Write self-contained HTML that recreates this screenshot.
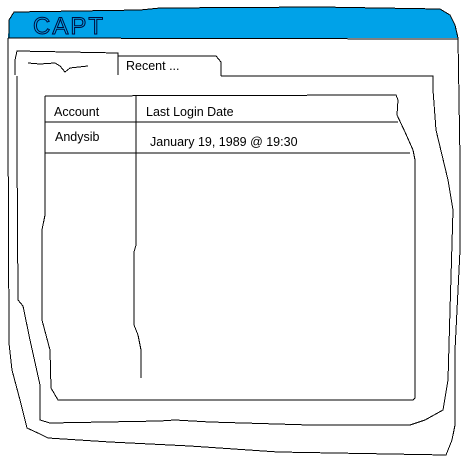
<!DOCTYPE html>
<html><head><meta charset="utf-8"><style>
html,body{margin:0;padding:0;background:#fff;width:465px;height:459px;overflow:hidden}
svg{display:block}
text{font-family:"Liberation Sans",sans-serif;font-size:12.5px;fill:#000;stroke:none}
polyline,line,path{shape-rendering:crispEdges}
</style></head><body>
<svg width="465" height="459" viewBox="0 0 465 459" xmlns="http://www.w3.org/2000/svg" fill="none" stroke="#000" stroke-width="1">
<!-- title bar -->
<path d="M8,38 L9,20 L14,12 L140,10 L160,8 L320,7 L440,9 L450,15 L455,25 L458,38 Z" fill="#00a2e8" stroke="none"/>
<polyline points="9,38 9,20 14,12 140,10 160,8 320,7 440,9 450,15 455,25 458,38"/>
<line x1="8" y1="38" x2="458" y2="39"/>
<text x="33" y="34" style="font-size:24px;fill:none;stroke:#000b3a;stroke-width:1;letter-spacing:2px">CAPT</text>
<!-- outer window -->
<polyline points="8,38 8,120 9,343 12,370 20,400 27,428 40,434 48,438 110,442 190,446 278,452 446,455 452,440 455,425 455,350 460,250 460,160 458,38"/>
<!-- inactive tab -->
<polyline points="15,75 15,60 17,51 118,53 118,75"/>
<path d="M28,63 L40,64 L55,63 L60,66 L65,72 L70,68 L88,66"/>
<!-- active tab -->
<polyline points="118,56 216,56 221,62 221,76"/>
<!-- panel -->
<polyline points="17,76 17,150 18,300 23,306 30,340 40,385 40,420 50,423 160,421 175,420 210,422 310,425 410,425 425,420 443,410 448,380 450,310 453,210 448,180 436,130 433,90 433,76 221,76"/>
<!-- table -->
<polyline points="45,96 396,95 398,100 397,115 405,132 413,150 415,160 415,398 413,400 58,400 51,388 50,350 42,320 42,230 45,215 45,96"/>
<line x1="45" y1="122" x2="398" y2="122"/>
<line x1="45" y1="153" x2="410" y2="153"/>
<polyline points="136,96 136,245 134,252 134,325 138,335 141,350 141,378"/>
<text x="54" y="116">Account</text>
<text x="146" y="116">Last Login Date</text>
<text x="55" y="141">Andysib</text>
<text x="150" y="146">January 19, 1989 @ 19:30</text>
<text x="126" y="70">Recent ...</text>
</svg>
</body></html>
